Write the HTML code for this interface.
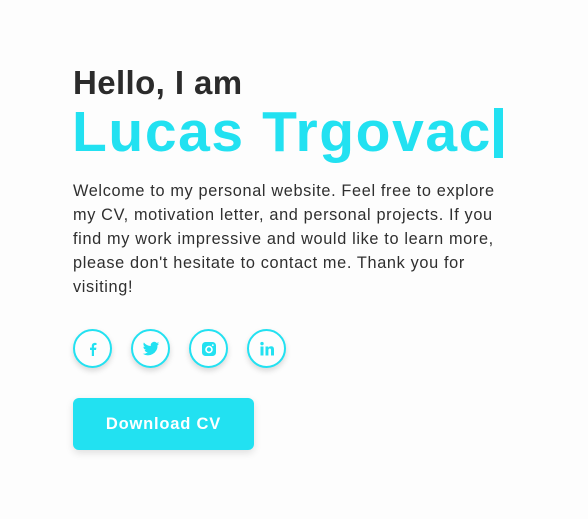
<!DOCTYPE html>
<html><head><style>
body{margin:0;width:588px;height:519px;background:#fdfdfd;font-family:"Liberation Sans",sans-serif;position:relative;overflow:hidden}
.h1{position:absolute;left:73px;top:64px;font-size:33px;font-weight:bold;color:#2b2b2b;letter-spacing:0.4px}
.h2{position:absolute;left:72px;top:99px;font-size:57px;font-weight:bold;color:#22e1f1;letter-spacing:1.6px;line-height:66px;white-space:nowrap}
.cur{position:absolute;left:494px;top:108px;width:9px;height:50px;background:#22e1f1}
.p{position:absolute;left:73px;top:179px;font-size:16.3px;line-height:24px;color:#2f2f2f;white-space:nowrap;letter-spacing:.65px}
.ic{position:absolute;top:329px;width:35px;height:35px;border:2px solid #22e1f1;border-radius:50%;box-shadow:0 3px 6px rgba(0,0,0,.15);display:flex;align-items:center;justify-content:center;background:#fdfdfd}
.btn{position:absolute;left:73px;top:398px;width:181px;height:52px;background:#22e1f1;border-radius:6px;box-shadow:0 3px 8px rgba(0,0,0,.12);color:#fff;font-weight:bold;font-size:16.5px;letter-spacing:.8px;display:flex;align-items:center;justify-content:center}
</style></head><body>
<div class="h1">Hello, I am</div>
<div class="h2">Lucas Trgovac</div>
<div class="cur"></div>
<div class="p">Welcome to my personal website. Feel free to explore<br>my CV, motivation letter, and personal projects. If you<br>find my work impressive and would like to learn more,<br>please don't hesitate to contact me. Thank you for<br>visiting!</div>
<div class="ic" style="left:73px"><svg width="16" height="16" viewBox="0 0 16 16"><path d="M9 15V9h2l.4-2.4H9V5.2c0-.7.3-1.2 1.3-1.2h1.2V2c-.4-.1-1-.1-1.700-.1-1.8 0-3 1.1-3 3v1.7H5V9h1.8v6z" fill="#22e1f1"/></svg></div>
<div class="ic" style="left:131px"><svg width="18" height="18" viewBox="0 0 24 24"><path d="M23 4.6a9 9 0 0 1-2.6.7 4.5 4.5 0 0 0 2-2.5 9 9 0 0 1-2.9 1.1 4.5 4.5 0 0 0-7.7 4.100A12.8 12.8 0 0 1 2.5 3.3a4.5 4.5 0 0 0 1.4 6 4.5 4.5 0 0 1-2-.6 4.5 4.5 0 0 0 3.6 4.5 4.5 4.5 0 0 1-2 .1 4.5 4.5 0 0 0 4.2 3.1A9 9 0 0 1 1 18.3a12.8 12.8 0 0 0 19.7-11.4A9 9 0 0 0 23 4.6z" fill="#22e1f1"/></svg></div>
<div class="ic" style="left:189px"><svg width="16" height="16" viewBox="0 0 16 16"><rect x="1" y="1" width="14" height="14" rx="3.5" fill="#22e1f1"/><circle cx="8" cy="8.5" r="3" fill="none" stroke="#fff" stroke-width="1.6"/><circle cx="11.8" cy="4.2" r=".9" fill="#fff"/></svg></div>
<div class="ic" style="left:247px"><svg width="16" height="16" viewBox="0 0 16 16"><rect x="1.5" y="5.5" width="3" height="9" fill="#22e1f1"/><circle cx="3" cy="2.6" r="1.7" fill="#22e1f1"/><path d="M6.5 5.5h2.8v1.3c.5-.9 1.6-1.5 2.9-1.5 2.2 0 2.8 1.4 2.8 3.4v5.8h-3V9.3c0-1-.2-1.800-1.2-1.8s-1.4.8-1.4 1.8v5.2H6.5z" fill="#22e1f1"/></svg></div>
<div class="btn">Download CV</div>
</body></html>
